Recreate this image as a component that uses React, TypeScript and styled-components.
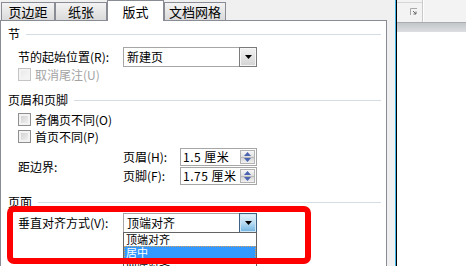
import React from 'react';
import styled, { createGlobalStyle } from 'styled-components';

const GlobalStyle = createGlobalStyle`
  html, body {
    margin: 0;
    padding: 0;
    background: #fff;
  }
  body {
    font-family: "Noto Sans CJK SC", sans-serif;
    font-size: 12px;
    color: #000;
  }
`;

function App() {
    return (
        <Page>
            <GlobalStyle />
            <Dialog>
                <TabRow>
                    <Tab $w={54}>页边距</Tab>
                    <Tab $w={52}>纸张</Tab>
                    <Tab $w={57} $active>版式</Tab>
                    <Tab $w={62}>文档网格</Tab>
                </TabRow>
                <Panel>
                    <Heading $mt={6}><span>节</span><Rule /></Heading>
                    <FieldRow $mt={6}>
                        <Label $w={105}>节的起始位置(R):</Label>
                        <Select>
                            <SelectText>新建页</SelectText>
                            <DropButton><Arrow /></DropButton>
                        </Select>
                    </FieldRow>
                    <CheckRow $mt={1} $disabled>
                        <CheckBox $disabled />
                        <span>取消尾注(U)</span>
                    </CheckRow>

                    <Heading $mt={12}><span>页眉和页脚</span><Rule /></Heading>
                    <CheckRow $mt={6}>
                        <CheckBox />
                        <span>奇偶页不同(O)</span>
                    </CheckRow>
                    <CheckRow $mt={4}>
                        <CheckBox />
                        <span>首页不同(P)</span>
                    </CheckRow>
                    <MarginGrid>
                        <BorderLabel>距边界:</BorderLabel>
                        <Label>页眉(H):</Label>
                        <SpinInput>
                            <span>1.5 厘米</span>
                            <Spinner />
                        </SpinInput>
                        <Label>页脚(F):</Label>
                        <SpinInput>
                            <span>1.75 厘米</span>
                            <Spinner />
                        </SpinInput>
                    </MarginGrid>

                    <Heading $mt={10}><span>页面</span><Rule /></Heading>
                    <FieldRow $mt={4}>
                        <Label $w={105}>垂直对齐方式(V):</Label>
                        <Select>
                            <SelectText>顶端对齐</SelectText>
                            <DropButton $open><Arrow /></DropButton>
                            <DropList>
                                <ListItem>顶端对齐</ListItem>
                                <ListItem $selected>居中</ListItem>
                                <ListItem>两端对齐</ListItem>
                            </DropList>
                        </Select>
                    </FieldRow>
                </Panel>
            </Dialog>
            <FrameEdge />
            <WordArea>
                <Ribbon>
                    <RibbonGroup>
                        <GroupTop />
                        <Launcher>
                            <svg width="8" height="8" viewBox="0 0 8 8">
                                <path d="M0.5 7V0.5H7" fill="none" stroke="#a8a8a8" />
                                <path d="M3 3L6 6M6 3.5V6H3.5" fill="none" stroke="#6a6a6a" />
                            </svg>
                        </Launcher>
                    </RibbonGroup>
                    <RibbonSep />
                </Ribbon>
                <RibbonShadow />
                <DocBody />
            </WordArea>
            <Highlight />
        </Page>
    );
}

function Arrow() {
    return (
        <svg width="7" height="4" viewBox="0 0 7 4">
            <polygon points="0,0 7,0 3.5,4" fill="#000" />
        </svg>
    );
}

function Spinner() {
    return (
        <SpinBox>
            <SpinHalf>
                <svg width="7" height="4" viewBox="0 0 7 4">
                    <polygon points="0,4 7,4 3.5,0" fill="#4a64b0" />
                </svg>
            </SpinHalf>
            <SpinHalf $down>
                <svg width="7" height="4" viewBox="0 0 7 4">
                    <polygon points="0,0 7,0 3.5,4" fill="#4a64b0" />
                </svg>
            </SpinHalf>
        </SpinBox>
    );
}

export default App;

const Page = styled.div`
  position: relative;
  display: flex;
  width: 466px;
  height: 266px;
  overflow: hidden;
`

const Dialog = styled.div`
  width: 395px;
  flex: none;
  background: #f0f0f0;
  display: flex;
  flex-direction: column;
`

const TabRow = styled.div`
  display: flex;
  align-items: flex-end;
  height: 20px;
  padding-left: 1px;
`

const Tab = styled.div<{ $w: number; $active?: boolean }>`
  position: relative;
  z-index: ${p => (p.$active ? 2 : 0)};
  box-sizing: border-box;
  width: ${p => p.$w}px;
  height: ${p => (p.$active ? 21 : 18)}px;
  margin-bottom: ${p => (p.$active ? -1 : 0)}px;
  border: 1px solid #898c95;
  border-bottom: none;
  background: ${p => (p.$active ? '#fff' : 'linear-gradient(#f3f3f3, #dadada)')};
  display: flex;
  align-items: center;
  justify-content: center;
  padding-top: ${p => (p.$active ? 2 : 0)}px;
  font-size: 13px;
  line-height: 14px;
`

const Panel = styled.div`
  box-sizing: border-box;
  width: 387px;
  flex: 1;
  background: #fff;
  border: 1px solid #898c95;
  border-bottom: none;
  padding: 0 5px 0 7px;
  display: flex;
  flex-direction: column;
`

const Heading = styled.div<{ $mt: number }>`
  display: flex;
  align-items: center;
  gap: 6px;
  height: 14px;
  margin-top: ${p => p.$mt}px;
  line-height: 14px;
`

const Rule = styled.div`
  flex: 1;
  height: 1px;
  background: #d5dde4;
`

const FieldRow = styled.div<{ $mt: number }>`
  display: flex;
  align-items: center;
  height: 20px;
  margin: ${p => p.$mt}px 0 0 10px;
`

const Label = styled.div<{ $w?: number }>`
  ${p => (p.$w ? `width: ${p.$w}px;` : '')}
  flex: none;
  white-space: nowrap;
  line-height: 14px;
  align-self: center;
`

const Select = styled.div`
  position: relative;
  box-sizing: border-box;
  width: 134px;
  height: 20px;
  border: 1px solid #a6a6a6;
  background: #fff;
  display: flex;
  align-items: center;
`

const SelectText = styled.span`
  flex: 1;
  padding-left: 3px;
  line-height: 14px;
`

const DropButton = styled.div<{ $open?: boolean }>`
  box-sizing: border-box;
  width: 18px;
  height: 20px;
  margin: -1px -1px -1px 0;
  border: 1px solid ${p => (p.$open ? '#3c6383' : '#7b7b7b')};
  box-shadow: inset 0 0 0 1px ${p => (p.$open ? '#cfe6f6' : '#f6f6f6')};
  background: ${p =>
    p.$open ? 'linear-gradient(#e4f1fb, #b9dcf3 50%, #6fb3e3)' : 'linear-gradient(#f2f2f2, #d3d3d3)'};
  display: flex;
  align-items: center;
  justify-content: center;
`

const DropList = styled.div`
  position: absolute;
  top: 100%;
  left: -1px;
  right: -1px;
  box-sizing: border-box;
  border: 1px solid #646464;
  background: #fff;
  z-index: 3;
`

const ListItem = styled.div<{ $selected?: boolean }>`
  box-sizing: border-box;
  height: 13px;
  font-size: 11px;
  line-height: 11px;
  padding-left: 1px;
  color: ${p => (p.$selected ? '#fff' : '#000')};
  background: ${p => (p.$selected ? '#3399ff' : 'transparent')};
  border: 1px dotted ${p => (p.$selected ? '#d9a25a' : 'transparent')};
`

const CheckRow = styled.div<{ $mt: number; $disabled?: boolean }>`
  display: flex;
  align-items: center;
  gap: 4px;
  height: 13px;
  margin: ${p => p.$mt}px 0 0 10px;
  line-height: 13px;
  color: ${p => (p.$disabled ? '#a3a3a3' : '#000')};
`

const CheckBox = styled.div<{ $disabled?: boolean }>`
  box-sizing: border-box;
  width: 13px;
  height: 13px;
  flex: none;
  border: 1px solid ${p => (p.$disabled ? '#c4c4c4' : '#8e8f8f')};
  background: ${p =>
    p.$disabled ? 'linear-gradient(135deg, #e6e6e6, #fafafa)' : 'linear-gradient(135deg, #cbcbcb, #f7f7f7)'};
  box-shadow: inset 0 0 0 2px #f3f3f3;
`

const MarginGrid = styled.div`
  display: grid;
  grid-template-columns: 105px 57px 77px;
  grid-template-rows: 18px 18px;
  row-gap: 1px;
  margin: 5px 0 0 10px;
`

const BorderLabel = styled.div`
  grid-row: 1 / span 2;
  align-self: center;
  line-height: 14px;
`

const SpinInput = styled.div`
  box-sizing: border-box;
  height: 18px;
  border: 1px solid #a6a6a6;
  display: flex;
  align-items: center;
  justify-content: space-between;
  padding: 0 1px 0 2px;
  letter-spacing: 0.5px;
  line-height: 14px;
  white-space: nowrap;
`

const SpinBox = styled.div`
  box-sizing: border-box;
  width: 15px;
  height: 14px;
  border: 1px solid #b3b3b3;
  display: flex;
  flex-direction: column;
  background: #f4f4f4;
`

const SpinHalf = styled.div<{ $down?: boolean }>`
  flex: 1;
  display: flex;
  align-items: center;
  justify-content: center;
  background: ${p => (p.$down ? 'linear-gradient(#d6d6d6, #f2f2f2)' : 'linear-gradient(#f7f7f7, #dedede)')};
  border-top: ${p => (p.$down ? '1px solid #b9b9b9' : 'none')};
`

const FrameEdge = styled.div`
  width: 1px;
  flex: none;
  border-left: 1px solid #3fb3e6;
  background: #000;
`

const WordArea = styled.div`
  flex: 1;
  display: flex;
  flex-direction: column;
  background: #fff;
`

const Ribbon = styled.div`
  height: 22px;
  display: flex;
  background: #f3f3f3;
`

const RibbonGroup = styled.div`
  width: 25px;
  display: flex;
  flex-direction: column;
`

const GroupTop = styled.div`
  height: 2px;
  border-bottom: 1px solid #d6d6d6;
`

const Launcher = styled.div`
  display: flex;
  justify-content: flex-end;
  padding: 5px 4px 0 0;
`

const RibbonSep = styled.div`
  width: 1px;
  background: #c9c9c9;
  border-right: 1px solid #fdfdfd;
`

const RibbonShadow = styled.div`
  height: 9px;
  border-top: 1px solid #a9abae;
  background: linear-gradient(#c3c6ca, #dcdee1);
`

const DocBody = styled.div`
  flex: 1;
  background: #fff;
`

const Highlight = styled.div`
  position: absolute;
  left: 7px;
  top: 206px;
  width: 304px;
  height: 58px;
  box-sizing: border-box;
  border: 6px solid #ff0000;
  border-radius: 7px;
  z-index: 5;
  pointer-events: none;
`
